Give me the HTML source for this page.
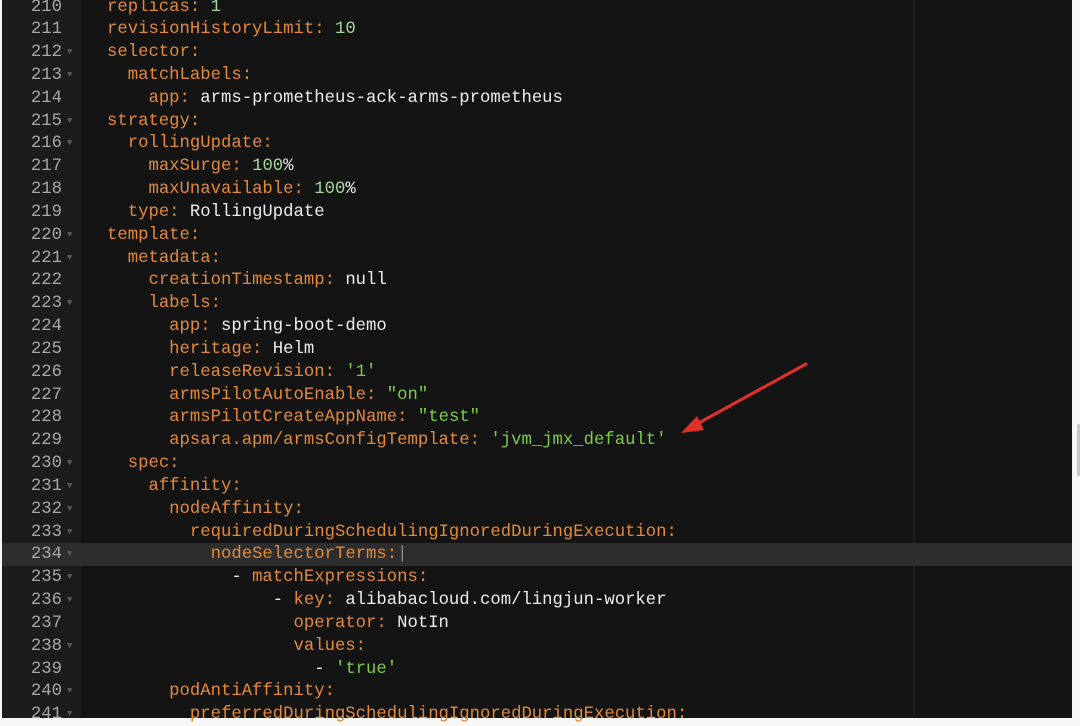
<html><head><style>
body{margin:0;width:1080px;height:718px;background:#f7f7f7;overflow:hidden;position:relative;font-family:"Liberation Mono",monospace;}
#ed{position:absolute;left:2px;top:0;width:1070px;height:718px;background:#141414;}
#gut{position:absolute;left:2px;top:0;width:79px;height:718px;background:#1c1c1c;}
.l{position:absolute;left:2px;width:1070px;height:23px;line-height:23px;font-size:17.27px;white-space:pre;}
.n{position:absolute;left:0;width:60px;text-align:right;color:#a8a8a8;}
.f{position:absolute;left:65px;top:0;color:#5a5a5a;font-size:9px;}
.c{position:absolute;left:105px;color:#ececec;}
.k{color:#e2893a}.g{color:#7ccb4a}.m{color:#a6d89a}
.hl{background:#2e2e2e;}
</style></head><body>
<div id="ed"></div><div id="gut"></div>
<div style="position:absolute;left:913px;top:0;width:2px;height:718px;background:#1e1e1e"></div>
<div style="position:absolute;left:1077px;top:424px;width:3px;height:52px;background:#c8c8c8;border-radius:2px"></div>
<div id="code"></div>
<svg style="position:absolute;left:0;top:0" width="1080" height="718"><line x1="806" y1="364" x2="695" y2="425" stroke="#e0302a" stroke-width="3" stroke-linecap="round"/><polygon points="681,433 697,416 704,430" fill="#e0302a"/></svg>
<script>
var L=[
[210,0,0,'<span class="k">replicas:</span> <span class="m">1</span>'],
[211,0,0,'<span class="k">revisionHistoryLimit:</span> <span class="m">10</span>'],
[212,1,0,'<span class="k">selector:</span>'],
[213,1,2,'<span class="k">matchLabels:</span>'],
[214,0,4,'<span class="k">app:</span> arms-prometheus-ack-arms-prometheus'],
[215,1,0,'<span class="k">strategy:</span>'],
[216,1,2,'<span class="k">rollingUpdate:</span>'],
[217,0,4,'<span class="k">maxSurge:</span> <span class="m">100</span>%'],
[218,0,4,'<span class="k">maxUnavailable:</span> <span class="m">100</span>%'],
[219,0,2,'<span class="k">type:</span> RollingUpdate'],
[220,1,0,'<span class="k">template:</span>'],
[221,1,2,'<span class="k">metadata:</span>'],
[222,0,4,'<span class="k">creationTimestamp:</span> null'],
[223,1,4,'<span class="k">labels:</span>'],
[224,0,6,'<span class="k">app:</span> spring-boot-demo'],
[225,0,6,'<span class="k">heritage:</span> Helm'],
[226,0,6,'<span class="k">releaseRevision:</span> <span class="g">\'1\'</span>'],
[227,0,6,'<span class="k">armsPilotAutoEnable:</span> <span class="g">"on"</span>'],
[228,0,6,'<span class="k">armsPilotCreateAppName:</span> <span class="g">"test"</span>'],
[229,0,6,'<span class="k">apsara.apm/armsConfigTemplate:</span> <span class="g">\'jvm_jmx_default\'</span>'],
[230,1,2,'<span class="k">spec:</span>'],
[231,1,4,'<span class="k">affinity:</span>'],
[232,1,6,'<span class="k">nodeAffinity:</span>'],
[233,1,8,'<span class="k">requiredDuringSchedulingIgnoredDuringExecution:</span>'],
[234,1,10,'<span class="k">nodeSelectorTerms:</span><span style="color:#888">|</span>'],
[235,1,12,'- <span class="k">matchExpressions:</span>'],
[236,1,16,'- <span class="k">key:</span> alibabacloud.com/lingjun-worker'],
[237,0,18,'<span class="k">operator:</span> NotIn'],
[238,1,18,'<span class="k">values:</span>'],
[239,0,20,'- <span class="g">\'true\'</span>'],
[240,1,6,'<span class="k">podAntiAffinity:</span>'],
[241,1,8,'<span class="k">preferredDuringSchedulingIgnoredDuringExecution:</span>']];
var h='';
L.forEach(function(a){var y=7+(a[0]-210)*22.83-11.5;
h+='<div class="l'+(a[0]==234?' hl':'')+'" style="top:'+y+'px"><span class="n">'+a[0]+'</span>'+(a[1]?'<span class="f">&#9660;</span>':'')+'<span class="c">'+' '.repeat(a[2])+a[3]+'</span></div>';});
document.getElementById('code').innerHTML=h;
</script>
</body></html>
